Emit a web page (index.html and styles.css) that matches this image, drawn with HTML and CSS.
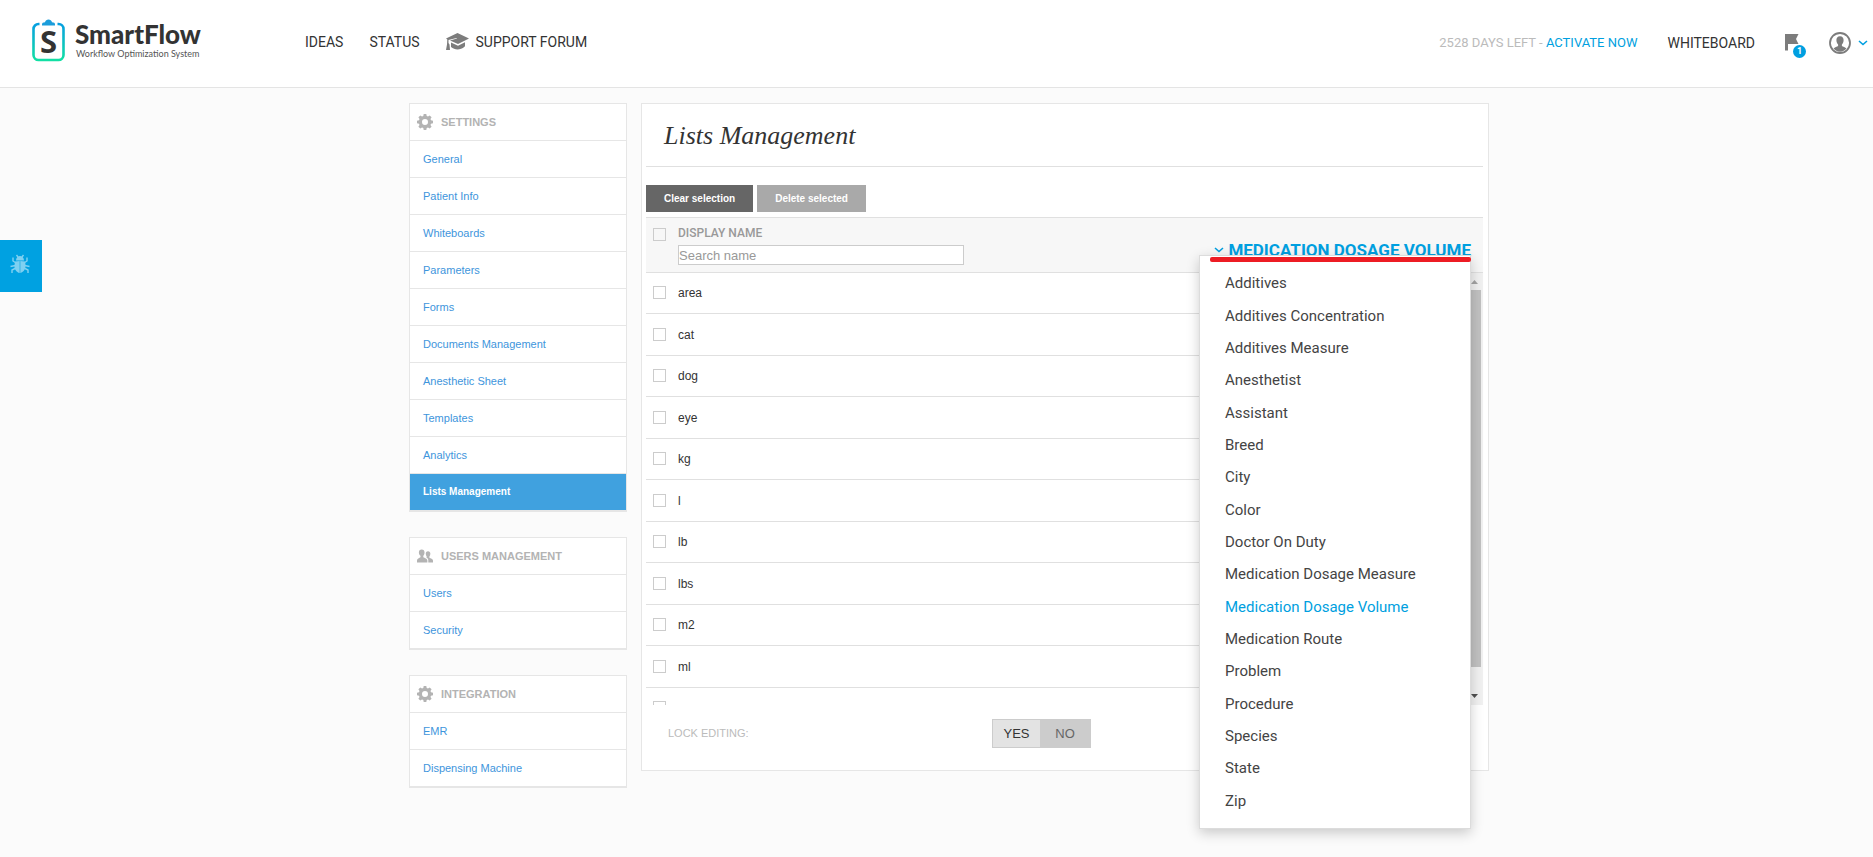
FILE: index.html
```html
<!DOCTYPE html>
<html lang="en">

<head>
    <meta charset="UTF-8">
    <meta name="viewport" content="width=device-width, initial-scale=1.0">
    <title>SmartFlow - Lists Management</title>
    <link rel="stylesheet" href="styles.css">
</head>

<body>

    <!-- shared icons -->
    <svg class="sprite" aria-hidden="true">
        <symbol id="gear" viewBox="0 0 16 16">
            <path fill-rule="evenodd" d="M6.7 0h2.6l.4 2 1.3.5L12.700 1.400l1.900 1.900L13.500 5l.5 1.300 2 .4v2.600l-2 .4-.5 1.300 1.100 1.700-1.900 1.900L11 13.500l-1.300.5-.4 2H6.700l-.4-2L5 13.500l-1.700 1.100-1.900-1.900L2.500 11 2 9.700l-2-.4V6.700l2-.4L2.500 5 1.400 3.300l1.900-1.900L5 2.500 6.300 2zM8 5a3 3 0 1 0 0 6 3 3 0 0 0 0-6z" />
        </symbol>
        <symbol id="chevron" viewBox="0 0 10 8">
            <path d="M1 2l4 3.500L9 2" fill="none" stroke="currentColor" stroke-width="1.600" />
        </symbol>
    </svg>

    <header class="header">
        <a href="#" class="logo">
            <svg class="logo-mark" width="33" height="43" viewBox="0 0 33 43" aria-hidden="true">
                <defs>
                    <linearGradient id="mark" x1="0" y1="0" x2="0" y2="1">
                        <stop offset="0" stop-color="#069fe0" />
                        <stop offset="1" stop-color="#12dfa4" />
                    </linearGradient>
                </defs>
                <path d="M7.500 5H6.500a5 5 0 0 0-5 5v26a5 5 0 0 0 5 5h20a5 5 0 0 0 5-5V10a5 5 0 0 0-5-5h-1" fill="none" stroke="url(#mark)" stroke-width="2.600" />
                <path d="M10 6.500V5.500C10 4 11 3.500 13 3.300 13.500 1.500 14.800.5 16.500.5s3 1 3.500 2.800c2 .2 3 .7 3 2.200v1z" fill="#1b9ddb" />
                <text x="16.500" y="34" class="mark-letter">S</text>
            </svg>
            <span class="logo-text">
                <strong>SmartFlow</strong>
                <small>Workflow Optimization System</small>
            </span>
        </a>
        <nav class="nav">
            <a href="#">IDEAS</a>
            <a href="#">STATUS</a>
            <a href="#" class="forum">
                <svg width="23" height="18" viewBox="0 0 23 18" aria-hidden="true">
                    <path d="M11.500 0L23 5.500 12 11 4 7.500 11 5.500 10.500 5 2.500 7v3l1 1.500L4 17H0l1-5.500L1.300 6.500 0 5.500z" />
                    <path d="M5 9.500l7 3.200 7-3.400v4c-3 2.700-5 3.200-7.500 3.200S7 15.500 5 14z" />
                </svg>
                SUPPORT FORUM
            </a>
        </nav>
        <div class="account">
            <span class="trial">2528 DAYS LEFT - <a href="#">ACTIVATE NOW</a></span>
            <a href="#" class="whiteboard">WHITEBOARD</a>
            <button type="button" class="flag" aria-label="Notifications">
                <svg width="14" height="17" viewBox="0 0 14 17" aria-hidden="true">
                    <path d="M0 0h13.500l-2.500 5 2.500 5H3v6.500H0z" />
                </svg>
                <span class="badge">1</span>
            </button>
            <button type="button" class="user" aria-label="Account">
                <svg width="22" height="22" viewBox="0 0 22 22" aria-hidden="true">
                    <circle cx="11" cy="11" r="10" fill="none" stroke="#7c7c7c" stroke-width="1.800" />
                    <path d="M11 4.200c2.500 0 3.700 1.700 3.600 4-.1 2-.8 3.500-1.700 4.300v1.600c1 .8 3.400 1.200 4.600 2.400A8.500 8.500 0 0 1 11 19.700a8.500 8.500 0 0 1-6.500-3.200c1.200-1.200 3.600-1.600 4.600-2.400v-1.600C8.200 11.700 7.500 10.200 7.400 8.200c-.1-2.300 1.100-4 3.600-4z" fill="#7c7c7c" />
                </svg>
                <svg class="blue" width="10" height="8" aria-hidden="true"><use href="#chevron" /></svg>
            </button>
        </div>
    </header>

    <button type="button" class="bug" aria-label="Report a bug">
        <svg width="20" height="20" viewBox="0 0 20 20" aria-hidden="true">
            <path d="M6.500 1l1.500 2M13.500 1L12 3M3 3.500v3.500l3 2M17 3.500v3.500l-3 2M0.500 12.500l5-1M19.500 12.500l-5-1M2 19v-3l4-2M18 19v-3l-4-2" fill="none" stroke="#7fd0f1" stroke-width="1.400" />
            <path d="M6 6.500a4 4.500 0 0 1 8 0zM5 7.500l4.700-.5v12C6.500 18.500 4 15 4.500 11zM10.300 7l4.700.5.500 3c.3 4-1.500 7.500-5.200 8.500z" fill="#7fd0f1" />
        </svg>
    </button>

    <div class="container">
        <aside class="sidebar">
            <section class="box">
                <h2><svg width="16" height="16"><use href="#gear" /></svg>SETTINGS</h2>
                <ul>
                    <li><a href="#">General</a></li>
                    <li><a href="#">Patient Info</a></li>
                    <li><a href="#">Whiteboards</a></li>
                    <li><a href="#">Parameters</a></li>
                    <li><a href="#">Forms</a></li>
                    <li><a href="#">Documents Management</a></li>
                    <li><a href="#">Anesthetic Sheet</a></li>
                    <li><a href="#">Templates</a></li>
                    <li><a href="#">Analytics</a></li>
                    <li><a href="#" class="active">Lists Management</a></li>
                </ul>
            </section>
            <section class="box">
                <h2>
                    <svg width="16" height="14" viewBox="0 0 17 14">
                        <path d="M5 0c2 0 3 1.300 3 3.200 0 1.500-.6 2.800-1.300 3.500v1.600c1.300.9 4.300 1.300 4.300 3.500V14H0v-2.200c0-2.200 2.500-2.600 3.700-3.500V6.700C2.700 6 2 4.700 2 3.200 2 1.300 3 0 5 0z" />
                        <path d="M11.700 2c1.700 0 2.500 1.200 2.500 2.700 0 1.200-.4 2.200-1 2.800v1.300c1.200.7 3.800 1.200 3.800 3V14h-5v-2.500c0-1.300-1-2.300-2-2.800l.3-1.200c-.6-.6-1-1.600-1-2.800C9.300 3.200 10 2 11.700 2z" />
                    </svg>USERS MANAGEMENT
                </h2>
                <ul>
                    <li><a href="#">Users</a></li>
                    <li><a href="#">Security</a></li>
                </ul>
            </section>
            <section class="box">
                <h2><svg width="16" height="16"><use href="#gear" /></svg>INTEGRATION</h2>
                <ul>
                    <li><a href="#">EMR</a></li>
                    <li><a href="#">Dispensing Machine</a></li>
                </ul>
            </section>
        </aside>

        <main class="panel">
            <h1>Lists Management</h1>
            <div class="actions">
                <button type="button">Clear selection</button>
                <button type="button" class="muted">Delete selected</button>
            </div>
            <div class="list-head">
                <input type="checkbox" class="check" aria-label="Select all">
                <div class="search">
                    <label for="search">DISPLAY NAME</label>
                    <input type="text" id="search" placeholder="Search name">
                </div>
                <div class="dropdown">
                    <button type="button" class="dropdown-toggle" aria-expanded="true">
                        <svg width="10" height="8" aria-hidden="true"><use href="#chevron" /></svg>MEDICATION DOSAGE VOLUME
                    </button>
                    <div class="menu">
                        <div class="mark-line"></div>
                        <ul>
                            <li><button type="button">Additives</button></li>
                            <li><button type="button">Additives Concentration</button></li>
                            <li><button type="button">Additives Measure</button></li>
                            <li><button type="button">Anesthetist</button></li>
                            <li><button type="button">Assistant</button></li>
                            <li><button type="button">Breed</button></li>
                            <li><button type="button">City</button></li>
                            <li><button type="button">Color</button></li>
                            <li><button type="button">Doctor On Duty</button></li>
                            <li><button type="button">Medication Dosage Measure</button></li>
                            <li><button type="button" class="selected">Medication Dosage Volume</button></li>
                            <li><button type="button">Medication Route</button></li>
                            <li><button type="button">Problem</button></li>
                            <li><button type="button">Procedure</button></li>
                            <li><button type="button">Species</button></li>
                            <li><button type="button">State</button></li>
                            <li><button type="button">Zip</button></li>
                        </ul>
                    </div>
                </div>
            </div>
            <div class="list">
                <table>
                    <tbody>
                        <tr><td class="pick"><input type="checkbox" class="check" id="r1"></td><td><label for="r1">area</label></td></tr>
                        <tr><td class="pick"><input type="checkbox" class="check" id="r2"></td><td><label for="r2">cat</label></td></tr>
                        <tr><td class="pick"><input type="checkbox" class="check" id="r3"></td><td><label for="r3">dog</label></td></tr>
                        <tr><td class="pick"><input type="checkbox" class="check" id="r4"></td><td><label for="r4">eye</label></td></tr>
                        <tr><td class="pick"><input type="checkbox" class="check" id="r5"></td><td><label for="r5">kg</label></td></tr>
                        <tr><td class="pick"><input type="checkbox" class="check" id="r6"></td><td><label for="r6">l</label></td></tr>
                        <tr><td class="pick"><input type="checkbox" class="check" id="r7"></td><td><label for="r7">lb</label></td></tr>
                        <tr><td class="pick"><input type="checkbox" class="check" id="r8"></td><td><label for="r8">lbs</label></td></tr>
                        <tr><td class="pick"><input type="checkbox" class="check" id="r9"></td><td><label for="r9">m2</label></td></tr>
                        <tr><td class="pick"><input type="checkbox" class="check" id="r10"></td><td><label for="r10">ml</label></td></tr>
                        <tr><td class="pick"><input type="checkbox" class="check" aria-label="New item"></td><td></td></tr>
                    </tbody>
                </table>
                <div class="scrollbar">
                    <svg width="7" height="4" viewBox="0 0 7 4" fill="#a3a3a3"><path d="M0 4l3.500-4L7 4z" /></svg>
                    <div class="thumb"></div>
                    <svg width="7" height="4" viewBox="0 0 7 4" fill="#505050"><path d="M0 0h7L3.500 4z" /></svg>
                </div>
            </div>
            <div class="lock">
                <span class="lock-label" id="lock">LOCK EDITING:</span>
                <div class="toggle" role="group" aria-labelledby="lock">
                    <button type="button">YES</button>
                    <button type="button" class="off">NO</button>
                </div>
            </div>
        </main>
    </div>

</body>

</html>
```

FILE: styles.css
```css
* {
    box-sizing: border-box;
}

body {
    min-height: 100vh;
    margin: 0;
    background: #fbfbfb;
    color: #333;
    font-family: "Liberation Sans", Arial, sans-serif;
    font-size: 12px;
}

a {
    color: inherit;
    text-decoration: none;
}

ul {
    margin: 0;
    padding: 0;
    list-style: none;
}

button {
    border: 0;
    padding: 0;
    background: none;
    color: inherit;
    font-family: inherit;
    cursor: pointer;
}

svg {
    flex: none;
}

.sprite {
    display: none;
}

/* header */
.header {
    display: flex;
    align-items: flex-start;
    height: 88px;
    padding: 19px 5px 0 32px;
    background: #fff;
    border-bottom: 1px solid #e4e4e4;
    font-family: Roboto, sans-serif;
    font-size: 14px;
}

.logo {
    display: flex;
    gap: 10px;
    width: 273px;
}

.mark-letter {
    font: bold 31px "Open Sans", sans-serif;
    fill: #333;
    text-anchor: middle;
}

.logo-text strong {
    display: block;
    font: 900 26px/30px Lato, sans-serif;
}

.logo-text small {
    display: block;
    padding-left: 1px;
    font: 9px/10px Lato, sans-serif;
    color: #555;
    white-space: nowrap;
}

.nav {
    display: flex;
    gap: 26px;
    height: 46px;
    align-items: center;
}

.forum {
    display: flex;
    align-items: center;
    gap: 7px;
}

.forum svg {
    fill: #7c7c7c;
}

.account {
    display: flex;
    align-items: center;
    height: 47px;
    margin-left: auto;
}

.trial {
    font-size: 13px;
    color: #bbb;
}

.trial a,
.blue {
    color: #009fe0;
}

.whiteboard {
    margin: 0 30px;
}

.flag {
    position: relative;
    height: 17px;
    margin-right: 30px;
}

.flag svg {
    display: block;
    fill: #7c7c7c;
}

.badge {
    position: absolute;
    left: 8px;
    top: 11px;
    width: 13px;
    height: 13px;
    border-radius: 50%;
    background: #009fe0;
    color: #fff;
    font: bold 9px/13px Roboto, sans-serif;
    text-align: center;
}

.user {
    display: flex;
    align-items: center;
    gap: 7px;
}

.bug {
    position: fixed;
    left: 0;
    top: 240px;
    width: 42px;
    height: 52px;
    background: #00a1e1;
}

.bug svg {
    display: block;
    margin: 0 auto 4px 10px;
}

/* layout */
.container {
    display: flex;
    align-items: flex-start;
    gap: 14px;
    max-width: 1105px;
    margin: 15px auto 0;
    padding-left: 25px;
}

/* sidebar */
.sidebar {
    display: flex;
    flex-direction: column;
    gap: 25px;
    width: 218px;
    flex: none;
}

.box {
    background: #fff;
    border: 1px solid #e6e6e6;
}

.box h2 {
    display: flex;
    align-items: center;
    gap: 8px;
    height: 37px;
    margin: 0;
    padding-left: 7px;
    border-bottom: 1px solid #e6e6e6;
    font-size: 11px;
    color: #b3b3b3;
}

.box h2 svg {
    fill: #b3b3b3;
}

.box li {
    height: 37px;
    border-bottom: 1px solid #e6e6e6;
}

.box li a {
    display: block;
    padding-left: 13px;
    line-height: 36px;
    font-size: 11px;
    color: #3e95dc;
}

.box li .active {
    background: #40a1df;
    color: #fff;
    font-size: 10px;
    font-weight: bold;
}

/* main panel */
.panel {
    flex: 1;
    padding: 0 5px 0 4px;
    background: #fff;
    border: 1px solid #e6e6e6;
}

.panel h1 {
    height: 63px;
    margin: 0 0 18px;
    padding-left: 18px;
    border-bottom: 1px solid #e0e0e0;
    font: italic 26px/64px "Liberation Serif", Georgia, serif;
}

.actions {
    display: flex;
    gap: 4px;
    margin-bottom: 5px;
}

.actions button {
    height: 27px;
    padding: 0 18px;
    background: #666;
    color: #fff;
    font-size: 10px;
    font-weight: bold;
}

.actions .muted {
    background: #a9a9a9;
}

.list-head {
    display: flex;
    align-items: flex-start;
    height: 56px;
    padding: 0 12px 0 7px;
    background: #f7f7f7;
    border: solid #e0e0e0;
    border-width: 1px 0;
}

.check {
    appearance: none;
    display: block;
    width: 13px;
    height: 13px;
    margin: 0;
    border: 1px solid #ccc;
    background: #fff;
}

.list-head .check {
    margin: 10px 12px 0 0;
    background: none;
}

.search {
    display: flex;
    flex-direction: column;
    gap: 4px;
    padding-top: 7px;
}

.search label {
    font: 12px/16px Roboto, sans-serif;
    font-weight: 500;
    color: #999;
}

.search input {
    width: 286px;
    height: 20px;
    padding: 0;
    border: 1px solid #ccc;
    font-family: inherit;
    font-size: 13px;
}

.search input::placeholder {
    color: #999;
}

.dropdown {
    position: relative;
    margin-left: auto;
    padding-top: 20px;
}

.dropdown-toggle {
    display: flex;
    align-items: center;
    gap: 4px;
    font: bold 17px/24px Roboto, sans-serif;
    color: #009fe0;
    white-space: nowrap;
}

.menu {
    position: absolute;
    right: 0;
    top: 37px;
    width: 272px;
    padding: 11px 0;
    background: #fff;
    border: 1px solid #dcdcdc;
    box-shadow: 0 4px 12px rgba(0, 0, 0, .2);
}

.mark-line {
    position: absolute;
    left: 10px;
    right: -1px;
    top: 1px;
    height: 5px;
    border-radius: 2px;
    background: #ed1c24;
}

.menu li {
    height: 32px;
}

.menu li:nth-child(3n+1) {
    height: 33px;
}

.menu li button {
    display: block;
    width: 100%;
    padding-left: 25px;
    font: 15px/33px Roboto, sans-serif;
    color: #444;
    text-align: left;
}

.menu li .selected {
    color: #009fe0;
}

/* list */
.list {
    display: flex;
    height: 432px;
    overflow: hidden;
}

.list table {
    flex: 1;
    height: 456px;
    border-collapse: separate;
    border-spacing: 0;
}

.list td {
    height: 41px;
    padding: 0;
    border-bottom: 1px solid #e0e0e0;
}

.list tr:nth-child(even) td {
    height: 42px;
}

.list .pick {
    width: 32px;
    padding: 0 12px 1px 7px;
}

.scrollbar {
    display: flex;
    flex-direction: column;
    align-items: center;
    width: 17px;
    padding: 7px 0;
    background: #f1f1f1;
}

.thumb {
    width: 13px;
    height: 377px;
    margin: 6px 0 27px;
    background: #c1c1c1;
}

.lock {
    display: flex;
    align-items: flex-start;
    height: 65px;
    padding: 14px 0 0 22px;
}

.lock-label {
    width: 324px;
    line-height: 29px;
    font-size: 11px;
    color: #bbb;
}

.toggle {
    display: flex;
    height: 29px;
    border: 1px solid #ccc;
}

.toggle button {
    width: 47px;
    background: #e3e3e3;
    font-size: 13px;
}

.toggle .off {
    width: 50px;
    background: #ccc;
    color: #666;
}
```
